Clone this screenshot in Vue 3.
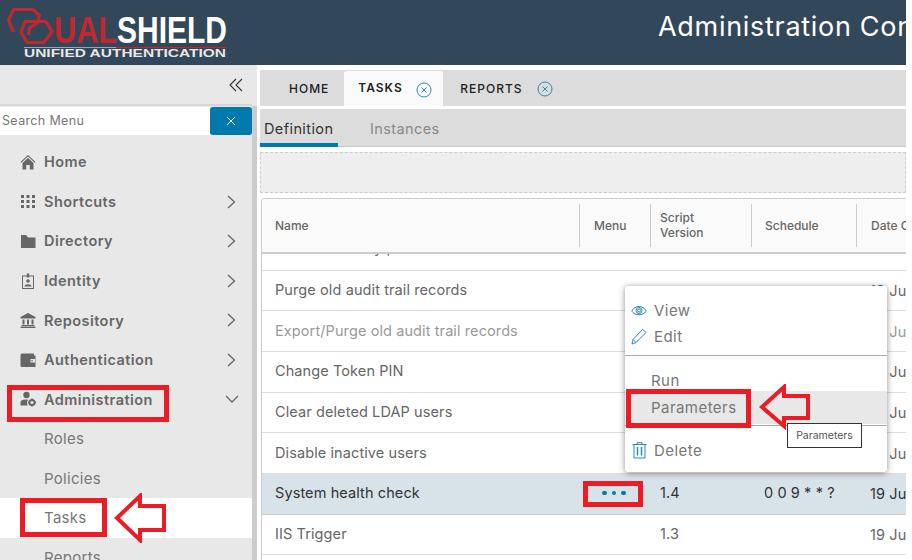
<script setup>
const menu = [
  { label: 'Home', icon: 'home' },
  { label: 'Shortcuts', icon: 'grid', chevron: 'right' },
  { label: 'Directory', icon: 'folder', chevron: 'right' },
  { label: 'Identity', icon: 'badge', chevron: 'right' },
  { label: 'Repository', icon: 'bank', chevron: 'right' },
  { label: 'Authentication', icon: 'wallet', chevron: 'right' },
  { label: 'Administration', icon: 'admin', chevron: 'down' },
]
const subMenu = ['Roles', 'Policies', 'Tasks', 'Reports']
const rows = [
  { name: 'Remove history period', version: '', schedule: '', date: '19 Jun 2020' },
  { name: 'Purge old audit trail records', version: '', schedule: '', date: '19 Jun 2020' },
  { name: 'Export/Purge old audit trail records', version: '', schedule: '', date: '19 Jun 2020', muted: true },
  { name: 'Change Token PIN', version: '', schedule: '', date: '19 Jun 2020' },
  { name: 'Clear deleted LDAP users', version: '', schedule: '', date: '19 Jun 2020' },
  { name: 'Disable inactive users', version: '', schedule: '', date: '19 Jun 2020' },
  { name: 'System health check', version: '1.4', schedule: '0 0 9 * * ?', date: '19 Jun 2020', selected: true },
  { name: 'IIS Trigger', version: '1.3', schedule: '', date: '19 Jun 2020' },
]
</script>

<template>
  <div class="page">
    <div class="frame">
      <header class="topbar">
        <svg class="logo" viewBox="0 0 230 65" width="230" height="65">
          <path d="M13.500 32 L8.500 20 L13.500 9.500 H33 L39.500 15.500 L37 23 L29.500 28 L28.500 35" fill="none" stroke="#c1272d" stroke-width="3.200" />
          <path d="M25 21.500 H46 L52 31.500 L44 42.500 H27 L21 32 Z" fill="none" stroke="#c1272d" stroke-width="3.200" />
          <text x="54" y="43" class="logo-ual" textLength="63" lengthAdjust="spacingAndGlyphs">UAL</text>
          <text x="117" y="43" class="logo-shield" textLength="110" lengthAdjust="spacingAndGlyphs">SHIELD</text>
          <path d="M24 47.500 H116" stroke="#9aa5ae" stroke-width="1" />
          <path d="M116 47.500 H226" stroke="#c1272d" stroke-width="1" />
          <text x="24" y="57" class="logo-sub" textLength="202" lengthAdjust="spacingAndGlyphs">UNIFIED AUTHENTICATION</text>
        </svg>
        <h1 class="title">Administration Console</h1>
      </header>

      <div class="body">
        <aside class="sidebar">
          <div class="collapse-row">
            <svg width="14" height="14" viewBox="0 0 14 14" fill="none" stroke="#333" stroke-width="1.100">
              <path d="M7 1 L1 7 L7 13 M13 1 L7 7 L13 13" />
            </svg>
          </div>
          <div class="side-scroll">
            <div class="search">
              <span class="search-input">Search Menu</span>
              <button class="search-btn">
                <svg width="10" height="10" viewBox="0 0 10 10" stroke="#fff" stroke-width="1"><path d="M1 1 L9 9 M9 1 L1 9" /></svg>
              </button>
            </div>
            <nav class="nav">
              <div v-for="item in menu" :key="item.label" class="nav-item">
                <svg class="nav-icon" width="16" height="16" viewBox="0 0 16 16" fill="#666">
                  <template v-if="item.icon === 'home'">
                    <path d="M8 1 L0.500 8 L1.200 8.700 L8 2.500 L14.800 8.700 L15.500 8 Z" />
                    <path d="M8 4 L2.500 9 V15.500 H6.200 V11 H9.800 V15.500 H13.500 V9 Z" />
                  </template>
                  <template v-else-if="item.icon === 'grid'">
                    <path d="M1 2h3v3H1zM6.500 2h3v3h-3zM12 2h3v3h-3zM1 7h3v3H1zM6.500 7h3v3h-3zM12 7h3v3h-3zM1 12h3v3H1zM6.500 12h3v3h-3zM12 12h3v3h-3z" />
                  </template>
                  <template v-else-if="item.icon === 'folder'">
                    <path d="M1 2 H6 L8 4.500 H15.500 V15 H1 Z" />
                  </template>
                  <template v-else-if="item.icon === 'badge'">
                    <rect x="2.500" y="3" width="11" height="12.500" fill="none" stroke="#666" stroke-width="1" />
                    <rect x="6.800" y="0.500" width="2.400" height="4" />
                    <circle cx="8" cy="8" r="1.800" />
                    <path d="M4.500 13.500 C4.500 10.500 11.500 10.500 11.500 13.500 Z" />
                  </template>
                  <template v-else-if="item.icon === 'bank'">
                    <path d="M8 1 L0.500 5 V6.500 H15.500 V5 Z" />
                    <path d="M2.500 7.500h2v5h-2zM7 7.500h2v5H7zM11.500 7.500h2v5h-2zM1.500 13h13v1.200h-13zM0.500 14.800h15V16H0.500z" />
                  </template>
                  <template v-else-if="item.icon === 'wallet'">
                    <path fill-rule="evenodd" d="M2 1.500 H14 V3.500 H15.500 V15 H2 Q0.500 15 0.500 13.500 V3 Q0.500 1.500 2 1.500 Z M10.500 7 V10.500 H15 V7 Z" />
                    <circle cx="12" cy="8.700" r="0.800" />
                  </template>
                  <template v-else-if="item.icon === 'admin'">
                    <circle cx="6.500" cy="4" r="3.200" />
                    <path d="M0.500 14.500 V11.500 Q0.500 8.500 6 8.500 H8 L7 11.500 L7.500 14.500 Z" />
                    <circle cx="12" cy="11.500" r="2.600" fill="none" stroke="#666" stroke-width="2" />
                    <path d="M11.200 7.500h1.600v1.500h-1.600zM11.200 14h1.600v1.500h-1.600zM8 10.700h1.500v1.600H8zM14.500 10.700H16v1.600h-1.500z" />
                  </template>
                </svg>
                <span class="nav-label">{{ item.label }}</span>
                <svg v-if="item.chevron === 'right'" class="chevron" width="9" height="14" viewBox="0 0 9 14" fill="none" stroke="#666" stroke-width="1.300">
                  <path d="M1 1 L7.500 7 L1 13" />
                </svg>
                <svg v-if="item.chevron === 'down'" class="chevron chevron-down" width="14" height="9" viewBox="0 0 14 9" fill="none" stroke="#666" stroke-width="1.300">
                  <path d="M1 1 L7 7 L13 1" />
                </svg>
              </div>
              <div
                v-for="sub in subMenu"
                :key="sub"
                class="nav-sub"
                :class="{ 'nav-sub-active': sub === 'Tasks' }"
              >{{ sub }}</div>
            </nav>
          </div>
        </aside>

        <main class="main">
          <div class="tabs">
            <span class="tab">HOME</span>
            <span class="tab tab-active">
              TASKS
              <svg class="tab-close" width="16" height="16" viewBox="0 0 16 16" fill="none" stroke="#2b8ab5" stroke-width="1"><circle cx="8" cy="8" r="7" /><path d="M5.500 5.500 L10.500 10.500 M10.500 5.500 L5.500 10.500" /></svg>
            </span>
            <span class="tab tab-reports">
              REPORTS
              <svg class="tab-close" width="16" height="16" viewBox="0 0 16 16" fill="none" stroke="#2b8ab5" stroke-width="1"><circle cx="8" cy="8" r="7" /><path d="M5.500 5.500 L10.500 10.500 M10.500 5.500 L5.500 10.500" /></svg>
            </span>
          </div>
          <div class="subtabs">
            <span class="subtab subtab-active">Definition</span>
            <span class="subtab">Instances</span>
          </div>
          <div class="toolbar"></div>
          <section class="table">
            <div class="row head">
              <div class="cell name">Name</div>
              <div class="cell menu sep">Menu</div>
              <div class="cell version sep">Script<br />Version</div>
              <div class="cell schedule sep">Schedule</div>
              <div class="cell date sep">Date Created</div>
            </div>
            <div class="rows">
              <div
                v-for="r in rows"
                :key="r.name"
                class="row"
                :class="{ muted: r.muted, selected: r.selected }"
              >
                <div class="cell name">{{ r.name }}</div>
                <div class="cell menu">
                  <span v-if="r.selected" class="dots"><i></i><i></i><i></i></span>
                </div>
                <div class="cell version">{{ r.version }}</div>
                <div class="cell schedule">{{ r.schedule }}</div>
                <div class="cell date">{{ r.date }}</div>
              </div>
            </div>
          </section>
        </main>
      </div>

      <div class="popup">
        <div class="pop-item pop-first">
          <svg width="16" height="12" viewBox="0 0 16 12" fill="none" stroke="#2b8ab5" stroke-width="1"><path d="M0.700 6 C4 0 12 0 15.300 6 C12 11 4 11 0.700 6 Z" /><circle cx="8" cy="5.500" r="3" /><circle cx="8" cy="5.500" r="1.500" /></svg>
          <span>View</span>
        </div>
        <div class="pop-item">
          <svg width="16" height="17" viewBox="0 0 16 17" fill="none" stroke="#2b8ab5" stroke-width="1"><path d="M1 16 L2 11.500 L11.500 1.500 L15 4.500 L5 14.500 Z M2 11.500 L5 14.500" /></svg>
          <span>Edit</span>
        </div>
        <div class="pop-line pop-line-a"></div>
        <div class="pop-item pop-plain">Run</div>
        <div class="pop-item pop-plain pop-hover">Parameters</div>
        <div class="pop-line pop-line-b"></div>
        <div class="pop-item pop-delete">
          <svg width="15" height="17" viewBox="0 0 15 17" fill="none" stroke="#2b8ab5" stroke-width="1"><path d="M0.500 2.500 H14.500 M5 2.500 V0.700 H10 V2.500 M2 2.500 V16 H13 V2.500" /><path d="M5.500 5 V13.500 M9.500 5 V13.500" stroke-width="1.500" /></svg>
          <span>Delete</span>
        </div>
      </div>
      <div class="tooltip">Parameters</div>

      <div class="mark mark-admin"></div>
      <div class="mark mark-tasks"></div>
      <div class="mark mark-params"></div>
      <div class="mark mark-dots"></div>
      <svg class="arrow arrow-tasks" width="56" height="50" viewBox="0 0 56 50" fill="none" stroke="#ed1c24" stroke-width="4">
        <path d="M4 25 L27 3 V13 H51 V37 H27 V47 Z" />
      </svg>
      <svg class="arrow arrow-params" width="54" height="46" viewBox="0 0 54 46" fill="none" stroke="#ed1c24" stroke-width="4">
        <path d="M4 23 L26 3 V12 H50 V34 H26 V42 Z" />
      </svg>
    </div>
  </div>
</template>

<style scoped>
.page {
  width: 912px;
  height: 560px;
  background: #fff;
  overflow: hidden;
  font-family: Inter, "Open Sans", sans-serif;
}
.frame {
  position: relative;
  width: 906px;
  height: 560px;
  overflow: hidden;
}
.topbar {
  height: 65px;
  background: #33475a;
  display: flex;
  align-items: flex-start;
}
.logo { flex: none; }
.logo-ual, .logo-shield {
  font-family: "Liberation Sans", sans-serif;
  font-size: 36px;
  font-weight: 700;
}
.logo-ual { fill: #c1272d; }
.logo-shield { fill: #fff; }
.logo-sub {
  font-family: "Liberation Sans", sans-serif;
  font-size: 11px;
  font-weight: 700;
  fill: #e8e8e8;
}
.title {
  margin: 9px 0 0 428px;
  font-size: 27px;
  line-height: 36px;
  font-weight: 400;
  letter-spacing: 0.700px;
  color: #fff;
  white-space: nowrap;
}
.body {
  display: flex;
  height: 495px;
  background: #fff;
}
.sidebar {
  flex: none;
  width: 257px;
  margin-right: 3px;
  background: #e8e8e8;
}
.collapse-row {
  height: 41px;
  width: 252px;
  border-bottom: 2px solid #d6d6d6;
  box-sizing: border-box;
  display: flex;
  align-items: center;
  justify-content: flex-end;
  padding-right: 9px;
}
.side-scroll {
  height: 454px;
  border-right: 5px solid #ccc;
}
.search {
  display: flex;
  height: 28px;
  padding-top: 1px;
}
.search-input {
  width: 210px;
  background: #fff;
  font-size: 12.500px;
  letter-spacing: 0.350px;
  line-height: 28px;
  padding-left: 2px;
  box-sizing: border-box;
  color: #777;
}
.search-btn {
  width: 42px;
  height: 28px;
  border: 0;
  border-radius: 3px;
  background: #0079ad;
  display: flex;
  align-items: center;
  justify-content: center;
  padding: 0;
}
.nav { margin-top: 7px; }
.nav-item {
  height: 39.600px;
  display: flex;
  align-items: center;
  padding-left: 20px;
  position: relative;
  color: #666;
  font-size: 14.500px;
  font-weight: 600;
  letter-spacing: 0.450px;
}
.nav-icon { flex: none; margin-right: 8px; }
.chevron { position: absolute; left: 227px; top: 13px; }
.chevron-down { left: 225px; top: 15px; }
.nav-sub {
  height: 39.600px;
  line-height: 39.600px;
  padding-left: 44px;
  color: #777;
  font-size: 15px;
  letter-spacing: 0.300px;
}
.nav-sub-active { background: #fff; }
.main {
  flex: 1;
  min-width: 0;
  padding-top: 5px;
}
.tabs {
  height: 36px;
  background: #dcdcdc;
  display: flex;
  align-items: center;
  font-size: 12px;
  font-weight: 500;
  letter-spacing: 1px;
  color: #222;
}
.tab {
  margin-left: 29px;
  display: flex;
  align-items: center;
}
.tab-active {
  margin-left: 15px;
  width: 99px;
  height: 35px;
  margin-top: 1px;
  background: #fafafa;
  border-radius: 3px 3px 0 0;
  box-sizing: border-box;
  padding-left: 14px;
  padding-bottom: 3px;
  font-weight: 600;
}
.tab-reports { margin-left: 17px; }
.tab-close { position: relative; top: 1px; margin-left: 14px; }
.tab-active .tab-close { top: 3px; margin-left: 13px; }
.subtabs {
  height: 38px;
  margin-top: 3px;
  background: #dcdcdc;
  border-bottom: 1px solid #c9c9c9;
  box-sizing: border-box;
  display: flex;
  align-items: stretch;
  font-size: 14.500px;
  letter-spacing: 0.400px;
  color: #888;
}
.subtab {
  padding: 0 4px;
  margin-right: 28px;
  line-height: 40px;
}
.subtab-active {
  width: 78px;
  box-sizing: border-box;
  color: #333;
  height: 38px;
  border-bottom: 4px solid #0079ad;
}
.toolbar {
  height: 41px;
  margin-top: 5px;
  background: #eee;
  border: 1px dashed #ccc;
  box-sizing: border-box;
}
.table {
  margin-top: 5px;
  margin-left: 1px;
  border-top: 1px solid #ccc;
  border-left: 1px solid #ccc;
  border-radius: 4px 0 0 0;
  overflow: hidden;
}
.row {
  display: grid;
  grid-template-columns: 317px 71px 101px 105px 200px;
  width: 795px;
  height: 40.600px;
  border-bottom: 1px solid #ddd;
  box-sizing: border-box;
  align-items: center;
  font-size: 14.500px;
  letter-spacing: 0.100px;
  color: #666;
  background: #fff;
}
.head {
  height: 55px;
  background: #fafafa;
  border-bottom: 2px solid #ccc;
  font-size: 12px;
  font-weight: 500;
  letter-spacing: 0;
  line-height: 15px;
}
.head .version { padding-bottom: 2px; box-sizing: border-box; }
.rows {
  height: 310px;
  overflow: hidden;
}
.rows .row:first-child { margin-top: -26px; height: 42.900px; }
.rows .cell { padding-bottom: 2px; }
.rows .date { padding-bottom: 0; }
.rows .row:first-child .cell { padding-bottom: 2px; }
.cell { white-space: nowrap; }
.name { padding-left: 13px; }
.menu { padding-left: 14px; }
.version { padding-left: 9px; }
.rows .version { padding-left: 10px; }
.schedule { padding-left: 13px; }
.date { padding-left: 14px; }
.sep {
  height: 43px;
  display: flex;
  flex-direction: column;
  justify-content: center;
  border-left: 1px solid #ccc;
}
.muted { color: #999; }
.selected {
  background: #d8e2e9;
  color: #333;
  height: 41px;
  border-bottom-color: #ccc;
}
.dots {
  display: flex;
  gap: 5px;
  margin-left: 9px;
}
.dots i {
  width: 4.500px;
  height: 4.500px;
  border-radius: 50%;
  background: #0079ad;
}
.popup {
  position: absolute;
  left: 625px;
  top: 286px;
  width: 262px;
  height: 186px;
  background: #fff;
  border-radius: 3px;
  box-shadow: 0 1px 6px rgba(0, 0, 0, 0.45);
  font-size: 15px;
  letter-spacing: 0.450px;
  color: #777;
}
.pop-item {
  height: 26px;
  display: flex;
  align-items: center;
  gap: 7px;
  padding-left: 6px;
  padding-bottom: 1px;
  box-sizing: border-box;
}
.pop-first { margin-top: 12px; }
.pop-plain { padding-left: 26px; }
.pop-line {
  height: 1px;
  background: #aaa;
}
.pop-line-a { margin: 5px 0 12px; }
.pop-line-b { margin-top: 1px; }
.pop-hover {
  background: #e8e8e8;
  height: 33px;
  margin-top: -3px;
}
.pop-delete { margin-top: 12px; padding-left: 7px; gap: 7px; }
.tooltip {
  position: absolute;
  left: 787px;
  top: 423px;
  width: 75px;
  height: 25px;
  box-sizing: border-box;
  background: #fff;
  border: 1px solid #333;
  font-size: 10.500px;
  line-height: 23px;
  text-align: center;
  color: #555;
}
.mark {
  position: absolute;
  border: 5px solid #ed1c24;
  box-sizing: border-box;
}
.mark-admin { left: 7px; top: 385px; width: 162px; height: 37px; }
.mark-tasks { left: 20px; top: 498px; width: 87px; height: 39px; }
.mark-params { left: 626px; top: 389px; width: 125px; height: 39px; }
.mark-dots { left: 583px; top: 481px; width: 60px; height: 26px; }
.arrow { position: absolute; }
.arrow-tasks { left: 113px; top: 493px; }
.arrow-params { left: 758px; top: 384px; }
</style>
